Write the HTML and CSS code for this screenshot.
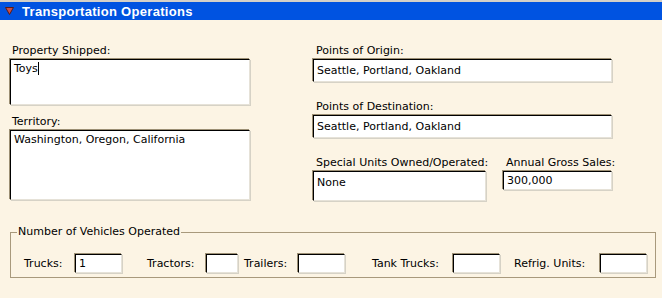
FILE: index.html
```html
<!DOCTYPE html>
<html lang="en">
<head>
  <meta charset="UTF-8">
  <title>Transportation Operations</title>
  <link rel="stylesheet" href="styles.css">
</head>
<body>
  <div class="section-head">
    <svg class="toggle" width="9" height="8" viewBox="0 0 9 8">
      <polygon points="0.5,0.5 8.5,0.5 4.5,7.5" fill="#c8504a" stroke="#5a1a14" stroke-width="1"/>
    </svg>
    <span>Transportation Operations</span>
  </div>

  <div class="form">
    <div class="col left">
      <div class="field">
        <label>Property Shipped:</label>
        <div class="box area prop">Toys<span class="caret"></span></div>
      </div>
      <div class="field">
        <label>Territory:</label>
        <div class="box area terr">Washington, Oregon, California</div>
      </div>
    </div>

    <div class="col right">
      <div class="field">
        <label>Points of Origin:</label>
        <div class="box line wide">Seattle, Portland, Oakland</div>
      </div>
      <div class="field">
        <label>Points of Destination:</label>
        <div class="box line wide">Seattle, Portland, Oakland</div>
      </div>
      <div class="pair">
        <div class="field special-field">
          <label>Special Units Owned/Operated:</label>
          <div class="box area special">None</div>
        </div>
        <div class="field">
          <label>Annual Gross Sales:</label>
          <div class="box line sales">300,000</div>
        </div>
      </div>
    </div>
  </div>

  <fieldset class="vehicles">
    <legend>Number of Vehicles Operated</legend>
    <div class="row">
      <label class="l-trucks">Trucks:</label><div class="box small">1</div>
      <label class="l-tractors">Tractors:</label><div class="box small narrow"></div>
      <label class="l-trailers">Trailers:</label><div class="box small"></div>
      <label class="l-tank">Tank Trucks:</label><div class="box small"></div>
      <label class="l-refrig">Refrig. Units:</label><div class="box small"></div>
    </div>
  </fieldset>
</body>
</html>
```

FILE: styles.css
```css
body {
  margin: 0;
  background: #fcf4e4;
  font-family: "DejaVu Sans", Verdana, sans-serif;
  font-size: 11px;
  color: #000;
  width: 662px;
  height: 298px;
  overflow: hidden;
}
.section-head {
  height: 18px;
  background: #0053e1;
  border-top: 2px solid #d4d0c8;
  display: flex;
  align-items: center;
  color: #fff;
  font-family: "Liberation Sans", Arial, sans-serif;
  font-weight: bold;
  font-size: 13px;
  letter-spacing: 0.3px;
}
.toggle {
  margin: 0 8px 0 5px;
}
.form {
  display: grid;
  grid-template-columns: 240px 299px;
  column-gap: 63px;
  padding: 24px 0 0 10px;
}
.col {
  display: flex;
  flex-direction: column;
}
label {
  display: block;
  line-height: 14px;
  white-space: nowrap;
}
.field label {
  padding-left: 2px;
  margin-bottom: 1px;
}
.right .field label {
  padding-left: 3px;
}
.box {
  box-sizing: border-box;
  background: #fff;
  border: 1px solid;
  border-color: #000 #e6e2d8 #e6e2d8 #000;
  box-shadow: -1px -1px 0 #9c8f74, 1px 1px 0 #d6d2c6;
  padding: 2px 3px;
  white-space: nowrap;
  overflow: hidden;
  line-height: 13px;
}
.area.prop {
  height: 46px;
}
.caret {
  display: inline-block;
  width: 1px;
  height: 13px;
  background: #000;
  vertical-align: top;
}
.left .field + .field {
  margin-top: 10px;
}
.area.terr {
  height: 70px;
}
.right > .field + .field {
  margin-top: 18px;
}
.line.wide {
  height: 23px;
  padding-top: 4px;
}
.pair {
  display: flex;
  align-items: flex-start;
  margin-top: 18px;
}
.pair .field {
  flex: none;
}
.special-field {
  width: 190px;
}
.area.special {
  width: 173px;
  height: 30px;
  padding-top: 4px;
}
.line.sales {
  width: 109px;
  height: 19px;
  padding-top: 2px;
}
.vehicles {
  margin: 24px 6px 0 10px;
  padding: 15px 0 0 0;
  height: 53px;
  box-sizing: border-box;
  border: 1px solid #a8997c;
}
.vehicles legend {
  padding: 0 1px;
  margin-left: 6px;
  line-height: 14px;
}
.row {
  display: flex;
  align-items: center;
}
.row label {
  flex: none;
}
.box.small {
  flex: none;
  width: 47px;
  height: 19px;
  padding-top: 2px;
}
.box.narrow {
  width: 32px;
}
.l-trucks {
  width: 51px;
  margin-left: 13px;
}
.l-tractors {
  width: 59px;
  margin-left: 25px;
}
.l-trailers {
  width: 54px;
  margin-left: 6px;
}
.l-tank {
  width: 81px;
  margin-left: 27px;
}
.l-refrig {
  width: 86px;
  margin-left: 14px;
}
```
